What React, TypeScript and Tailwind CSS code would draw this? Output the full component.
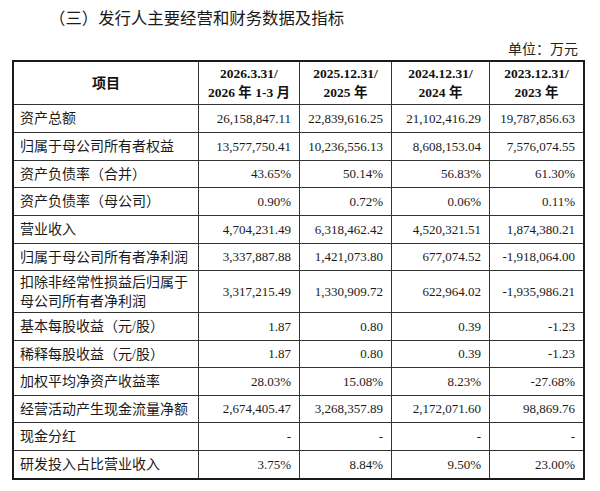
import React from "react";

type Row = { label: string[]; vals: string[]; h: string };

const rows: Row[] = [
  { label: ["资产总额"], vals: ["26,158,847.11", "22,839,616.25", "21,102,416.29", "19,787,856.63"], h: "h-[28px]" },
  { label: ["归属于母公司所有者权益"], vals: ["13,577,750.41", "10,236,556.13", "8,608,153.04", "7,576,074.55"], h: "h-[28px]" },
  { label: ["资产负债率（合并）"], vals: ["43.65%", "50.14%", "56.83%", "61.30%"], h: "h-[27px]" },
  { label: ["资产负债率（母公司）"], vals: ["0.90%", "0.72%", "0.06%", "0.11%"], h: "h-[28px]" },
  { label: ["营业收入"], vals: ["4,704,231.49", "6,318,462.42", "4,520,321.51", "1,874,380.21"], h: "h-[28px]" },
  { label: ["归属于母公司所有者净利润"], vals: ["3,337,887.88", "1,421,073.80", "677,074.52", "-1,918,064.00"], h: "h-[27px]" },
  { label: ["扣除非经常性损益后归属于", "母公司所有者净利润"], vals: ["3,317,215.49", "1,330,909.72", "622,964.02", "-1,935,986.21"], h: "h-[42px]" },
  { label: ["基本每股收益（元/股）"], vals: ["1.87", "0.80", "0.39", "-1.23"], h: "h-[28px]" },
  { label: ["稀释每股收益（元/股）"], vals: ["1.87", "0.80", "0.39", "-1.23"], h: "h-[27px]" },
  { label: ["加权平均净资产收益率"], vals: ["28.03%", "15.08%", "8.23%", "-27.68%"], h: "h-[28px]" },
  { label: ["经营活动产生现金流量净额"], vals: ["2,674,405.47", "3,268,357.89", "2,172,071.60", "98,869.76"], h: "h-[27px]" },
  { label: ["现金分红"], vals: ["-", "-", "-", "-"], h: "h-[28px]" },
  { label: ["研发投入占比营业收入"], vals: ["3.75%", "8.84%", "9.50%", "23.00%"], h: "h-[27px]" },
];

const headers: string[][] = [
  ["2026.3.31/", "2026 年 1-3 月"],
  ["2025.12.31/", "2025 年"],
  ["2024.12.31/", "2024 年"],
  ["2023.12.31/", "2023 年"],
];

const colW = ["w-[185px]", "w-[101px]", "w-[92px]", "w-[98px]", "w-[93px]"];

export default function App() {
  return (
    <div
      className="w-[600px] h-[491px] bg-white text-[#111] overflow-hidden"
      style={{ fontFamily: '"Liberation Serif", "Noto Sans CJK SC", serif' }}
    >
      <div
        className="pt-[5px] pl-[49px] text-[16.4px] leading-[24px] text-[#1a1a1a]"
        style={{ fontFamily: '"Noto Sans CJK SC", "Noto Sans", sans-serif' }}
      >
        （三）发行人主要经营和财务数据及指标
      </div>
      <div className="mt-[11px] h-[20px] pr-[22px] flex justify-end items-center text-[14px] leading-[20px] text-[#222]">
        单位：万元
      </div>
      <div className="ml-[12px] w-[573px] border-2 border-[#1a1a1a] flex flex-col">
        <div className="flex h-[43px] border-b border-[#333]">
          <div className={`${colW[0]} border-r border-[#333] flex items-center justify-center font-bold text-[14px]`}>
            项目
          </div>
          {headers.map((h, i) => (
            <div
              key={i}
              className={`${colW[i + 1]} ${i < 3 ? "border-r border-[#333]" : ""} flex flex-col items-center justify-center font-bold text-[13.5px] leading-[19px]`}
            >
              <span>{h[0]}</span>
              <span>{h[1]}</span>
            </div>
          ))}
        </div>
        {rows.map((r, ri) => (
          <div
            key={ri}
            className={`flex ${r.h} ${ri < rows.length - 1 ? "border-b border-[#333]" : ""}`}
          >
            <div className={`${colW[0]} border-r border-[#333] flex flex-col justify-center pl-[6px] text-[14px] leading-[19px] text-[#1a1a1a]`}>
              {r.label.map((l, li) => (
                <span key={li}>{l}</span>
              ))}
            </div>
            {r.vals.map((v, vi) => (
              <div
                key={vi}
                className={`${colW[vi + 1]} ${vi < 3 ? "border-r border-[#333]" : ""} flex items-center justify-end pr-[8px] text-[13px] text-[#1a1a1a]`}
              >
                {v}
              </div>
            ))}
          </div>
        ))}
      </div>
    </div>
  );
}
